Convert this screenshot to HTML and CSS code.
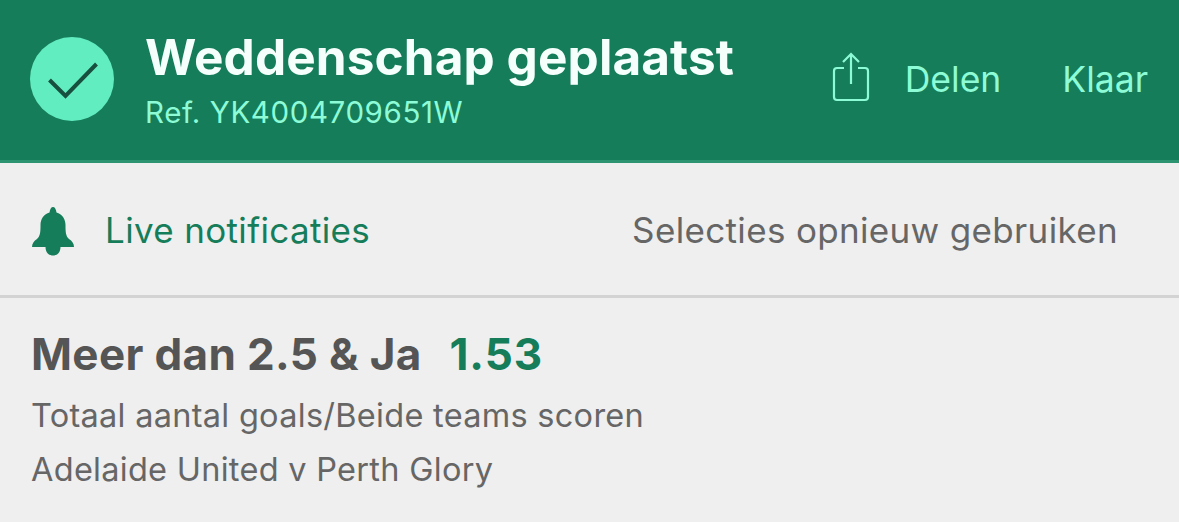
FILE: index.html
```html
<!DOCTYPE html>
<html lang="nl">
<head>
    <meta charset="UTF-8">
    <meta name="viewport" content="width=device-width, initial-scale=1.0">
    <title>Weddenschap geplaatst</title>
    <link rel="stylesheet" href="styles.css">
</head>
<body>
<header class="receipt-header">
    <svg class="check-icon" viewBox="0 0 84 84">
        <circle cx="42" cy="42" r="42" fill="#62edc0"/>
        <path d="M19.5 43 L35.5 59 L66.500 27" fill="none" stroke="#17503f" stroke-width="4"/>
    </svg>
    <div class="receipt-info">
        <h1 class="receipt-title">Weddenschap geplaatst</h1>
        <p class="receipt-ref">Ref. YK4004709651W</p>
    </div>
    <div class="actions">
        <a class="action share">
            <svg class="share-icon" viewBox="0 0 38 50">
                <path d="M12 16 H5 Q2 16 2 19 V45 Q2 48 5 48 H33 Q36 48 36 45 V19 Q36 16 33 16 H26 M19 32 V2 M11 10 L19 2 L27 10" fill="none" stroke="#8dfcd6" stroke-width="2.2"/>
            </svg>
            <span>Delen</span>
        </a>
        <a class="action">Klaar</a>
    </div>
</header>

<div class="options">
    <a class="notifications">
        <svg class="bell-icon" viewBox="0 0 42 49">
            <path d="M21 0 C22.800 0 24 2 24.500 5.500 C30 7 33.500 12 33.500 18 C33.500 24 33.500 29 37 32 C40 34 42 36.500 42 40 H28.500 C28.500 45 25.500 48.500 21 48.500 C16.500 48.500 13.500 45 13.500 40 H0 C0 36.500 2 34 5 32 C8.500 29 8.500 24 8.500 18 C8.500 12 12 7 17.500 5.500 C18 2 19.200 0 21 0 Z" fill="#167d5a"/>
        </svg>
        <span>Live notificaties</span>
    </a>
    <a class="reuse">Selecties opnieuw gebruiken</a>
</div>

<main class="selection">
    <h2 class="selection-title">Meer dan 2.5 &amp; Ja <span class="odds">1.53</span></h2>
    <p class="market">Totaal aantal goals/Beide teams scoren</p>
    <p class="match">Adelaide United v Perth Glory</p>
</main>
</body>
</html>
```
FILE: styles.css
```css
body {
  font-family: Inter, 'Liberation Sans', sans-serif;
  margin: 0;
  background-color: #efefef;
  color: #666;
}

h1, h2, p {
  margin: 0;
  white-space: nowrap;
}

.receipt-header {
  display: flex;
  align-items: center;
  height: 160px;
  padding: 0 31px 0 30px;
  background-color: #167d5a;
  border-bottom: 3px solid #2c9470;
}

.check-icon {
  width: 84px;
  height: 84px;
  margin: 0 31px 2px 0;
}

.receipt-title {
  font-size: 49.5px;
  line-height: 58px;
  font-weight: 700;
  letter-spacing: 0.1px;
  color: #f5fffc;
}

.receipt-ref {
  margin-top: 6px;
  font-size: 29.5px;
  line-height: 40px;
  letter-spacing: 0.6px;
  color: #8dfcd6;
}

.actions {
  display: flex;
  align-items: center;
  gap: 61px;
  margin-left: auto;
  margin-bottom: 1px;
  font-size: 35.5px;
  color: #8dfcd6;
}

.share {
  display: flex;
  align-items: center;
  gap: 35px;
}

.share-icon {
  width: 38px;
  height: 50px;
  margin-bottom: 5px;
}

.options {
  display: flex;
  align-items: center;
  justify-content: space-between;
  height: 130px;
  padding: 2px 61px 0 32px;
  font-size: 35px;
  letter-spacing: 0.34px;
  border-bottom: 3px solid #d3d3d3;
}

.notifications {
  display: flex;
  align-items: center;
  gap: 31px;
  color: #167d5a;
}

.bell-icon {
  width: 42px;
  height: 49px;
  margin-top: 2px;
}

.selection {
  padding: 28px 31px 0;
}

.selection-title {
  margin-bottom: 7px;
  font-size: 44px;
  line-height: 56px;
  font-weight: 700;
  letter-spacing: 0.35px;
  color: #555;
}

.odds {
  margin-left: 17px;
  letter-spacing: 0.9px;
  color: #167d5a;
}

.market, .match {
  font-size: 32.5px;
  line-height: 54px;
  letter-spacing: 0.28px;
}
```
